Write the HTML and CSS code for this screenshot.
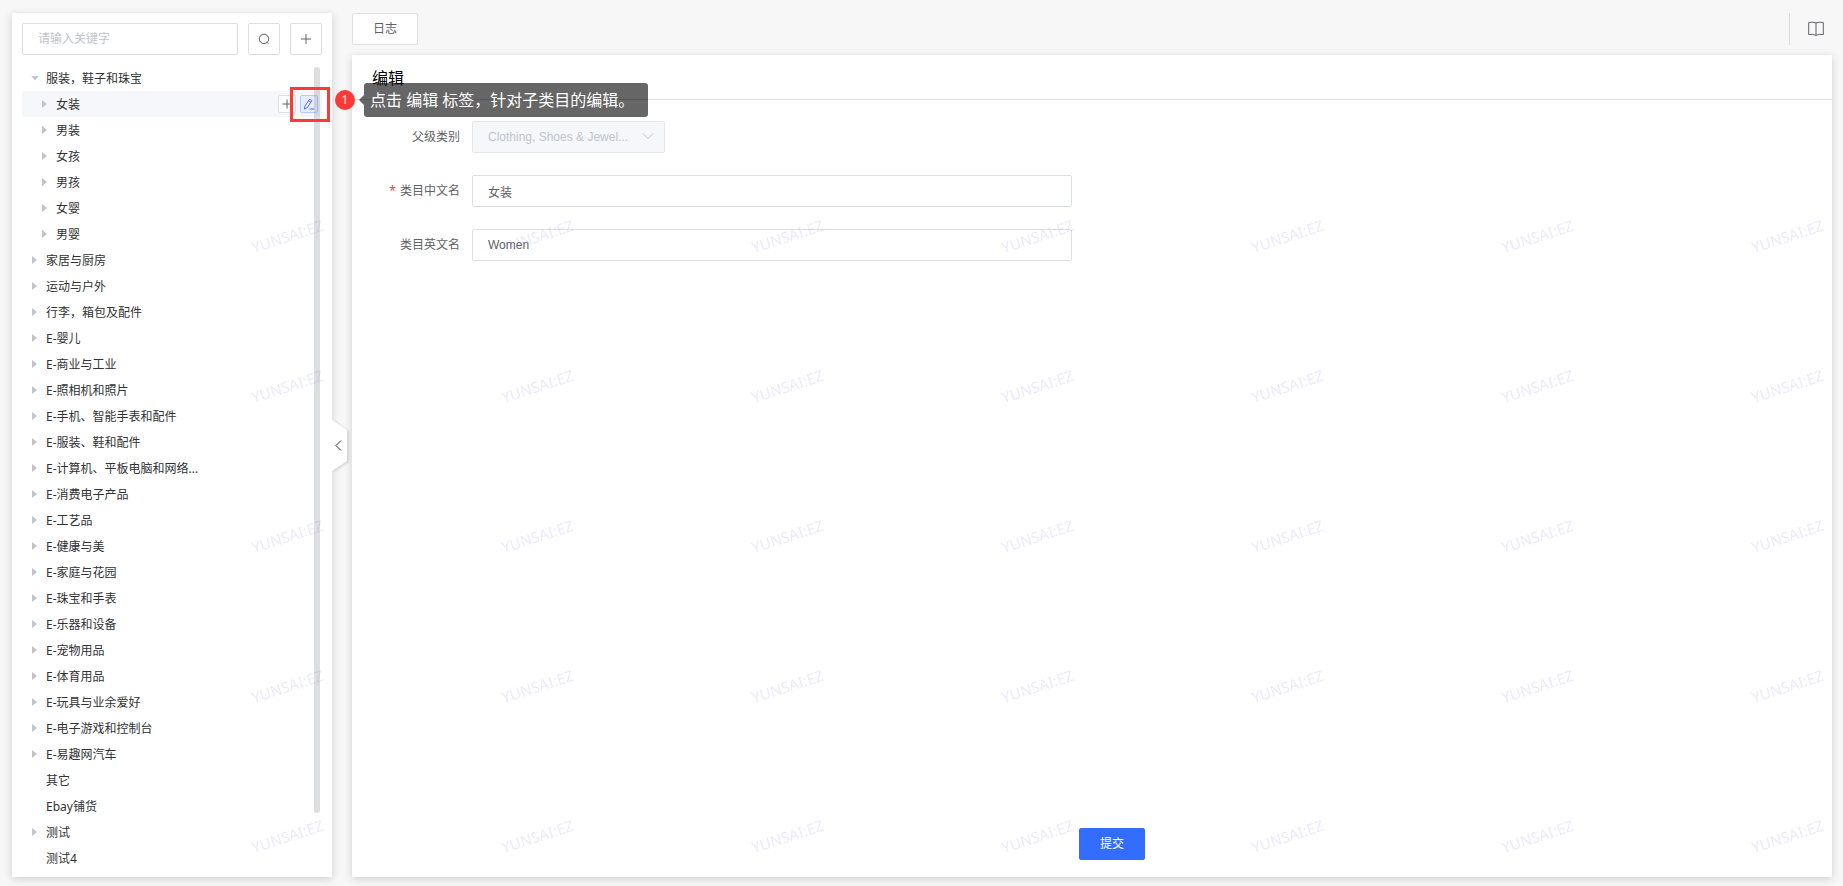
FILE: index.html
```html
<!DOCTYPE html>
<html lang="zh-CN">
<head>
<meta charset="utf-8">
<title>编辑</title>
<link rel="stylesheet" href="styles.css">
</head>
<body>
<div class="app">
  <aside class="sidebar">
    <form class="search">
      <input class="input search-input" type="text" placeholder="请输入关键字" aria-label="请输入关键字">
      <button class="icon-btn" type="button" aria-label="搜索"><svg width="12" height="12" viewBox="0 0 12 12"><path d="M6 1.2a4.7 4.7 0 1 0 0 9.4a4.7 4.7 0 1 0 0-9.4M8.7 9l1.8 1.8"/></svg></button>
      <button class="icon-btn" type="button" aria-label="添加"><svg width="12" height="12" viewBox="0 0 12 12"><path d="M6 1v10M1 6h10"/></svg></button>
    </form>
    <div class="tree-wrap">
      <ul class="tree">
        <li class="node open">服装，鞋子和珠宝</li>
        <li class="node child selected">女装
          <span class="actions">
            <button class="mini-btn" type="button" aria-label="添加子类目"><svg width="10" height="10" viewBox="0 0 10 10"><path d="M5 0.5v9M0.5 5h9"/></svg></button>
            <button class="mini-btn active" type="button" aria-label="编辑类目"><svg width="12" height="12" viewBox="0 0 12 12"><path d="M6.6 1.2l2.3 1.4-4.6 7-2.9 1.6.5-3.1zM5.6 2.8l2.3 1.4M6.5 11h5"/></svg></button>
          </span>
        </li>
        <li class="node child">男装</li>
        <li class="node child">女孩</li>
        <li class="node child">男孩</li>
        <li class="node child">女婴</li>
        <li class="node child">男婴</li>
        <li class="node">家居与厨房</li>
        <li class="node">运动与户外</li>
        <li class="node">行李，箱包及配件</li>
        <li class="node">E-婴儿</li>
        <li class="node">E-商业与工业</li>
        <li class="node">E-照相机和照片</li>
        <li class="node">E-手机、智能手表和配件</li>
        <li class="node">E-服装、鞋和配件</li>
        <li class="node">E-计算机、平板电脑和网络...</li>
        <li class="node">E-消费电子产品</li>
        <li class="node">E-工艺品</li>
        <li class="node">E-健康与美</li>
        <li class="node">E-家庭与花园</li>
        <li class="node">E-珠宝和手表</li>
        <li class="node">E-乐器和设备</li>
        <li class="node">E-宠物用品</li>
        <li class="node">E-体育用品</li>
        <li class="node">E-玩具与业余爱好</li>
        <li class="node">E-电子游戏和控制台</li>
        <li class="node">E-易趣网汽车</li>
        <li class="node leaf">其它</li>
        <li class="node leaf">Ebay铺货</li>
        <li class="node">测试</li>
        <li class="node leaf">测试4</li>
      </ul>
      <div class="scrollbar"></div>
      <div class="callout-box"></div>
      <div class="callout">
        <span class="badge">1</span>
        <span class="tip">点击 编辑 标签，针对子类目的编辑。</span>
      </div>
    </div>
    <button class="collapse" type="button" aria-label="收起"><svg width="15" height="51" viewBox="0 0 15 51"><path class="tab" d="M0 0L15 10V41L0 51z"/><path class="chev" d="M9 20.5L4 25.5L9 30.5"/></svg></button>
  </aside>

  <main class="main">
    <header class="toolbar">
      <button class="btn" type="button">日志</button>
      <div class="help">
        <button class="help-btn" type="button" aria-label="帮助"><svg width="16" height="16" viewBox="0 0 16 16"><path d="M.7 1.5Q5 .6 8 1.9Q11 .6 15.3 1.5V13.6Q11 12.8 8 14.3Q5 12.8.7 13.6zM8 1.9V14.3"/></svg></button>
      </div>
    </header>
    <section class="panel">
      <h1 class="title">编辑</h1>
      <form class="form">
        <div class="field">
          <label class="label" for="parent">父级类别</label>
          <div class="select-wrap">
            <select class="input select" id="parent" disabled><option>Clothing, Shoes &amp; Jewel...</option></select>
            <svg class="caret" width="12" height="12" viewBox="0 0 12 12"><path d="M1 3.5l5 5 5-5"/></svg>
          </div>
        </div>
        <div class="field">
          <label class="label required" for="cn">类目中文名</label>
          <input class="input text" id="cn" type="text" value="女装">
        </div>
        <div class="field">
          <label class="label" for="en">类目英文名</label>
          <input class="input text" id="en" type="text" value="Women">
        </div>
        <div class="footer"><button class="btn primary" type="button">提交</button></div>
      </form>
    </section>
  </main>
</div>
<div class="watermark" aria-hidden="true">
  <span>YUNSAI:EZ</span><span>YUNSAI:EZ</span><span>YUNSAI:EZ</span><span>YUNSAI:EZ</span><span>YUNSAI:EZ</span><span>YUNSAI:EZ</span><span>YUNSAI:EZ</span>
  <span>YUNSAI:EZ</span><span>YUNSAI:EZ</span><span>YUNSAI:EZ</span><span>YUNSAI:EZ</span><span>YUNSAI:EZ</span><span>YUNSAI:EZ</span><span>YUNSAI:EZ</span>
  <span>YUNSAI:EZ</span><span>YUNSAI:EZ</span><span>YUNSAI:EZ</span><span>YUNSAI:EZ</span><span>YUNSAI:EZ</span><span>YUNSAI:EZ</span><span>YUNSAI:EZ</span>
  <span>YUNSAI:EZ</span><span>YUNSAI:EZ</span><span>YUNSAI:EZ</span><span>YUNSAI:EZ</span><span>YUNSAI:EZ</span><span>YUNSAI:EZ</span><span>YUNSAI:EZ</span>
  <span>YUNSAI:EZ</span><span>YUNSAI:EZ</span><span>YUNSAI:EZ</span><span>YUNSAI:EZ</span><span>YUNSAI:EZ</span><span>YUNSAI:EZ</span><span>YUNSAI:EZ</span>
</div>
</body>
</html>
```

FILE: styles.css
```css
* { box-sizing: border-box; }

body {
  margin: 0;
  background: #f7f7f7;
  color: #303133;
  font: 12px/24px "Noto Sans", "Noto Sans CJK SC", sans-serif;
}

button, input, select { font: inherit; margin: 0; }
svg { display: block; fill: none; stroke: currentColor; }

.app {
  display: flex;
  gap: 20px;
  min-height: 100vh;
  padding: 13px 11px 9px 12px;
}

.sidebar, .panel {
  background: #fff;
  box-shadow: 0 2px 8px rgba(0, 0, 0, .16);
}

.sidebar {
  position: relative;
  flex: none;
  width: 320px;
  padding: 10px 10px 6px;
}

.search { display: flex; gap: 10px; margin-bottom: 10px; }

.input {
  height: 32px;
  padding: 0 15px;
  border: 1px solid #dcdfe6;
  border-radius: 2px;
  background: #fff;
  color: #606266;
  font-family: "Liberation Sans", "Noto Sans CJK SC", sans-serif;
  line-height: 30px;
}
.input::placeholder { color: #c0c4cc; }
.search-input { flex: 1; min-width: 0; }

.icon-btn, .mini-btn {
  display: flex;
  align-items: center;
  justify-content: center;
  padding: 0;
  border: 1px solid #dcdfe6;
  border-radius: 2px;
  background: #fff;
  color: #606266;
}
.icon-btn { width: 32px; height: 32px; }
.mini-btn { width: 18px; height: 18px; }
.mini-btn.active { border-color: #b3cbff; background: #e6edff; color: #5b6cff; }

.tree-wrap { position: relative; }
.tree { margin: 0; padding: 0; list-style: none; }

.node {
  display: flex;
  align-items: center;
  height: 26px;
  padding: 2px 0 0 10px;
}
.node::before {
  content: "";
  width: 5px;
  height: 8px;
  margin: 0 9px 2px 0;
  background: #c0c4cc;
  clip-path: polygon(0 0, 100% 50%, 0 100%);
}
.node.child { padding-left: 20px; }
.node.open { padding-left: 9px; }
.node.open::before { width: 8px; height: 5px; margin-right: 7px; clip-path: polygon(0 0, 100% 0, 50% 100%); }
.node.leaf::before { background: none; }
.node.selected { background: #f5f7fa; }
.actions { display: flex; gap: 4px; margin-left: auto; padding: 0 4px 2px 0; }

.scrollbar {
  position: absolute;
  top: 2px;
  right: 2px;
  width: 6px;
  height: 746px;
  border-radius: 3px;
  background: rgba(144, 147, 153, .3);
}

.callout-box {
  position: absolute;
  top: 22px;
  left: 268px;
  width: 40px;
  height: 35px;
  border: 3px solid #ff3838;
}

.callout {
  position: absolute;
  z-index: 3;
  top: 18px;
  left: 313px;
  display: flex;
  align-items: center;
  gap: 9px;
}
.badge {
  width: 20px;
  height: 20px;
  border-radius: 50%;
  background: #ff3838;
  color: #fff;
  line-height: 20px;
  text-align: center;
}
.tip {
  position: relative;
  width: 284px;
  padding: 0 6px;
  border-radius: 3px;
  background: rgba(0, 0, 0, .6);
  color: #fff;
  font-size: 16px;
  line-height: 34px;
  white-space: nowrap;
}
.tip::before {
  content: "";
  position: absolute;
  top: 12px;
  right: 100%;
  border: 5px solid transparent;
  border-right-color: rgba(0, 0, 0, .6);
  border-left: 0;
}

.collapse {
  position: absolute;
  top: 407px;
  left: 100%;
  padding: 0;
  border: 0;
  background: none;
  color: #303133;
  filter: drop-shadow(2px 1px 1px rgba(0, 0, 0, .12));
}
.tab { fill: #fff; stroke: none; }

.main {
  display: flex;
  flex: 1;
  flex-direction: column;
  gap: 10px;
  min-width: 0;
}

.toolbar { display: flex; justify-content: space-between; }
.btn {
  width: 66px;
  height: 32px;
  padding: 0;
  border: 1px solid #dcdfe6;
  border-radius: 2px;
  background: #fff;
  color: #606266;
}
.btn.primary { border-color: #336dff; background: #336dff; color: #fff; }
.help { display: flex; align-items: center; padding: 0 8px 0 18px; border-left: 1px solid #dcdcdc; }
.help-btn { padding: 0; border: 0; background: none; color: #606266; }

.panel { display: flex; flex: 1; flex-direction: column; }
.title {
  margin: 0;
  padding: 2px 20px 0;
  border-bottom: 1px solid #dcdcdc;
  color: #000;
  font-size: 16px;
  font-weight: 400;
  line-height: 42px;
}

.form {
  display: flex;
  flex: 1;
  flex-direction: column;
  gap: 22px;
  padding: 21px 0 17px;
}
.field { display: flex; }
.label {
  width: 120px;
  padding-right: 12px;
  color: #606266;
  line-height: 32px;
  text-align: right;
}
.required::before { content: "*"; margin-right: 4px; color: #ff3838; }
.text { width: 600px; }

.select-wrap { position: relative; width: 193px; }
.select {
  width: 100%;
  appearance: none;
  border-color: #e4e7ed;
  background: #f5f7fa;
  color: #c0c4cc;
  opacity: 1;
}
.caret { position: absolute; top: 9px; right: 11px; color: #c0c4cc; }
.footer { margin-top: auto; padding-left: 40px; line-height: 0; text-align: center; }
.footer .btn { line-height: 30px; }

.watermark {
  position: fixed;
  z-index: 5;
  inset: 161px 0 0 162px;
  display: grid;
  grid-template-columns: repeat(7, 250px);
  grid-auto-rows: 150px;
  overflow: hidden;
  pointer-events: none;
}
.watermark span {
  place-self: center;
  color: rgba(110, 80, 255, .13);
  font-size: 15px;
  line-height: 20px;
  transform: rotate(-18deg);
}
```
